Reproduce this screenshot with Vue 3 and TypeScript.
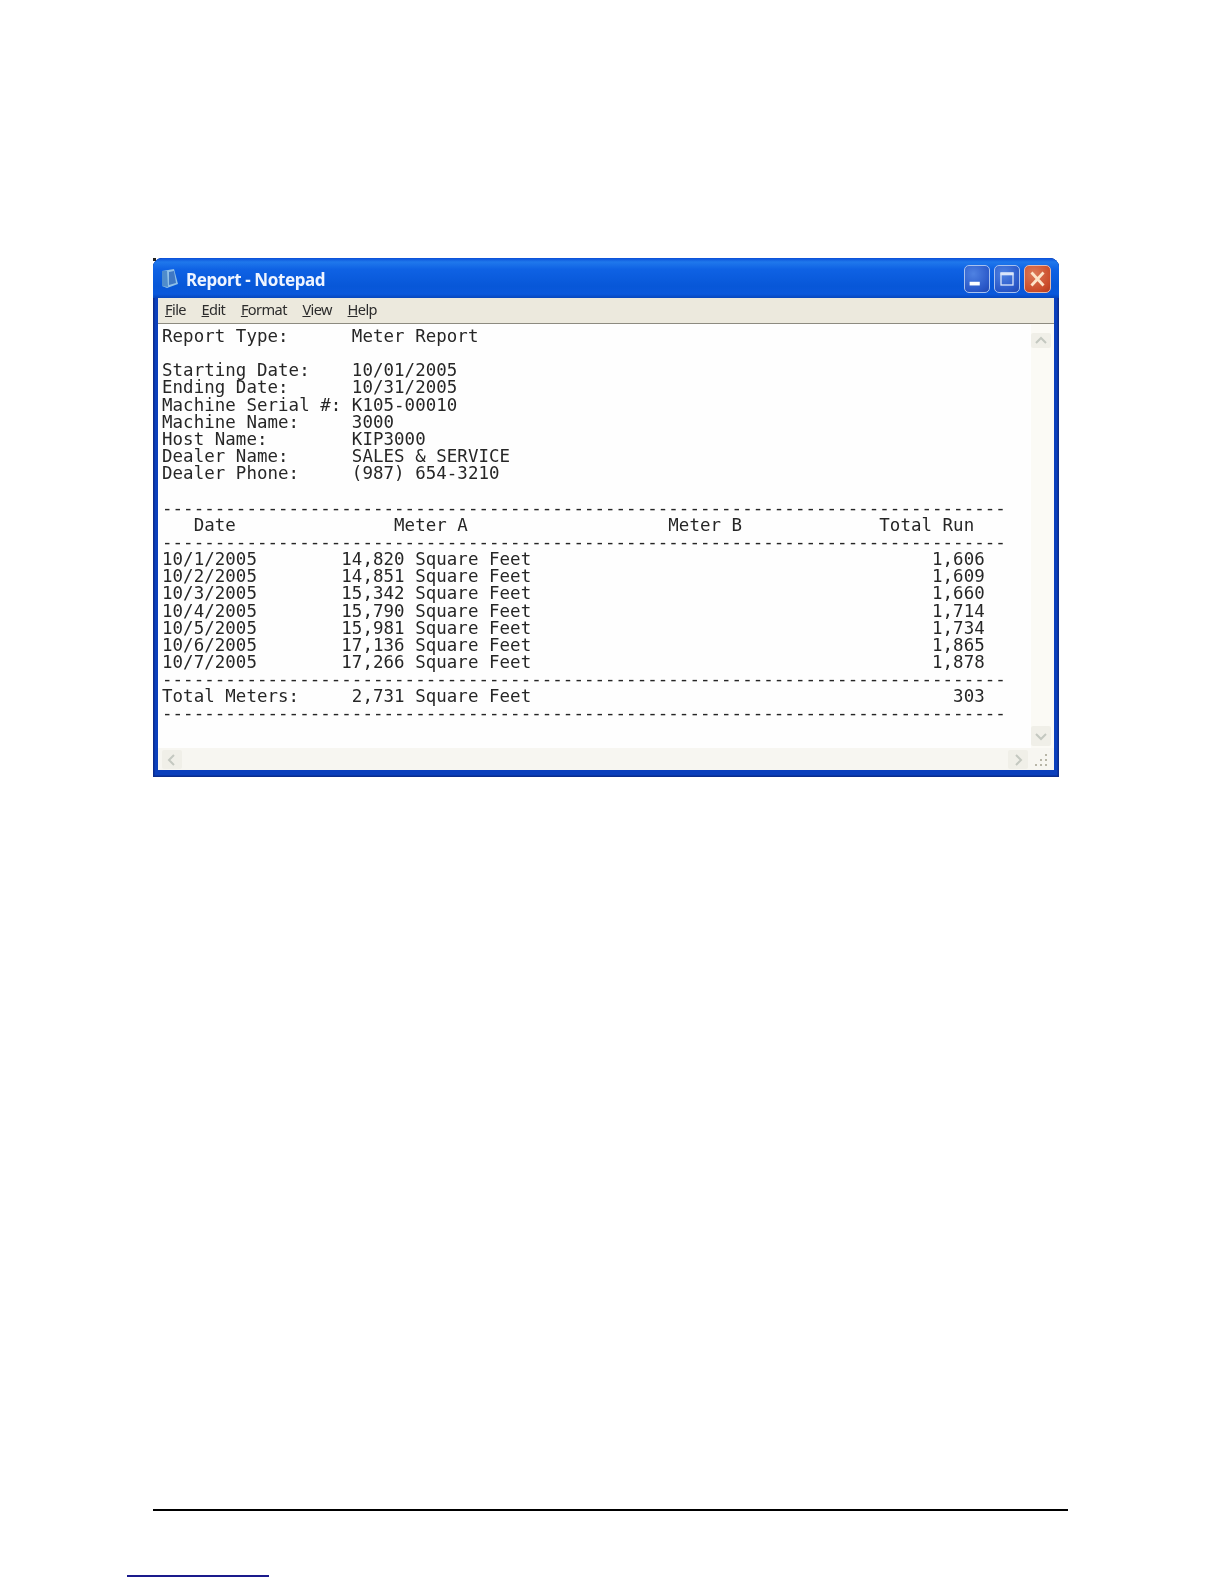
<script setup lang="ts">
const menus: [string, string][] = [['F', 'ile'], ['E', 'dit'], ['F', 'ormat'], ['V', 'iew'], ['H', 'elp']]
const dash = '-'.repeat(80)
const report = [
  'Report Type:      Meter Report',
  '',
  'Starting Date:    10/01/2005',
  'Ending Date:      10/31/2005',
  'Machine Serial #: K105-00010',
  'Machine Name:     3000',
  'Host Name:        KIP3000',
  'Dealer Name:      SALES & SERVICE',
  'Dealer Phone:     (987) 654-3210',
  '',
  dash,
  '   Date               Meter A                   Meter B             Total Run',
  dash,
  '10/1/2005        14,820 Square Feet                                      1,606',
  '10/2/2005        14,851 Square Feet                                      1,609',
  '10/3/2005        15,342 Square Feet                                      1,660',
  '10/4/2005        15,790 Square Feet                                      1,714',
  '10/5/2005        15,981 Square Feet                                      1,734',
  '10/6/2005        17,136 Square Feet                                      1,865',
  '10/7/2005        17,266 Square Feet                                      1,878',
  dash,
  'Total Meters:     2,731 Square Feet                                        303',
  dash,
].join('\n')
</script>

<template>
  <div class="page">
    <div class="window">
      <i class="speck"></i>
      <div class="titlebar">
        <svg class="app-icon" width="20" height="22" viewBox="0 0 20 22">
          <path d="M2 3 L14 1 L18 16 L7 20 L2 18 Z" fill="#8fc0e8" />
          <path d="M2 3 L7 3 L8 19 L2 18 Z" fill="#4f8ccc" />
          <path d="M9 4 L14 3 L16 15 L9 17 Z" fill="#3f78c4" />
        </svg>
        <span class="title">Report - Notepad</span>
        <div class="controls">
          <div class="ctl blue">
            <svg width="26" height="28" viewBox="0 0 26 28"><rect x="5" y="17" width="11" height="4" fill="#fff" /></svg>
          </div>
          <div class="ctl blue">
            <svg width="26" height="28" viewBox="0 0 26 28"><rect x="6.5" y="7.5" width="13" height="13" fill="none" stroke="#dbe6fa" stroke-width="1.4" /><rect x="6" y="7" width="14" height="3" fill="#dbe6fa" /></svg>
          </div>
          <div class="ctl red">
            <svg width="27" height="28" viewBox="0 0 27 28"><path d="M7 7 L20 21 M20 7 L7 21" stroke="#fde4c8" stroke-width="3" /></svg>
          </div>
        </div>
      </div>
      <div class="client">
        <div class="menubar">
          <span v-for="m in menus" :key="m[1]" class="menu"><u>{{ m[0] }}</u>{{ m[1] }}</span>
        </div>
        <div class="body">
          <pre class="text">{{ report }}</pre>
          <div class="vscroll">
            <div class="sbtn">
              <svg width="20" height="15" viewBox="0 0 20 15"><path d="M5 10 L10 5 L15 10" fill="none" stroke="#c4c8c0" stroke-width="2" /></svg>
            </div>
            <div class="sbtn">
              <svg width="20" height="20" viewBox="0 0 20 20"><path d="M5 8 L10 13 L15 8" fill="none" stroke="#c4c8c0" stroke-width="2" /></svg>
            </div>
          </div>
        </div>
        <div class="hscroll">
          <div class="sbtn h">
            <svg width="20" height="19" viewBox="0 0 20 19"><path d="M12 5 L7 10 L12 15" fill="none" stroke="#c4c8c0" stroke-width="2" /></svg>
          </div>
          <div class="sbtn h">
            <svg width="20" height="19" viewBox="0 0 20 19"><path d="M8 5 L13 10 L8 15" fill="none" stroke="#c4c8c0" stroke-width="2" /></svg>
          </div>
          <svg class="grip" width="20" height="19" viewBox="0 0 20 19" fill="#b8b6a8">
            <rect x="14" y="4" width="2" height="2" /><rect x="9" y="9" width="2" height="2" /><rect x="14" y="9" width="2" height="2" />
            <rect x="4" y="14" width="2" height="2" /><rect x="9" y="14" width="2" height="2" /><rect x="14" y="14" width="2" height="2" />
          </svg>
        </div>
      </div>
    </div>
    <div class="rule"></div>
    <div class="link-rule"></div>
  </div>
</template>

<style scoped>
.page {
  width: 1224px;
  height: 1584px;
  background: #fff;
  padding-top: 258px;
  box-sizing: border-box;
  overflow: hidden;
}
.window {
  position: relative;
  width: 906px;
  height: 519px;
  margin-left: 153px;
  box-sizing: border-box;
  display: flex;
  flex-direction: column;
  border-radius: 9px 9px 0 0;
  background: #0b3fbc;
  box-shadow: inset 0 0 0 1.5px #0a2c8e;
  padding: 0 5px 7px 5px;
  filter: blur(0.4px);
}
.speck {
  position: absolute;
  left: 0;
  top: 0;
  width: 3px;
  height: 3px;
  background: #222;
  z-index: 1;
}
.titlebar {
  height: 40px;
  margin: 0 -5px;
  padding: 2px 8px 0 7px;
  box-sizing: border-box;
  display: flex;
  align-items: center;
  border-radius: 9px 9px 0 0;
  background: linear-gradient(180deg, #0b4fd8 0%, #1f78ec 10%, #0f62e4 28%, #0757d8 70%, #0a58dc 90%, #0746bc 100%);
}
.app-icon {
  flex: none;
  margin-right: 6px;
}
.title {
  font: 700 17px "Noto Sans", "Open Sans", sans-serif;
  letter-spacing: -0.4px;
  color: #eef4ff;
}
.controls {
  margin-left: auto;
  display: flex;
  gap: 4px;
  margin-top: -1px;
}
.ctl {
  height: 28px;
  box-sizing: border-box;
  border: 1px solid #a9c2ee;
  border-radius: 5px;
  display: flex;
  align-items: center;
  justify-content: center;
  overflow: hidden;
}
.ctl.blue {
  width: 26px;
  background: radial-gradient(circle at 35% 30%, #4f82e2, #2a58c8 70%, #2148b0);
}
.ctl.red {
  width: 27px;
  border-color: #e8b8a8;
  background: radial-gradient(circle at 35% 30%, #dc7a58, #cb4d2a 70%, #b23a1e);
}
.client {
  flex: 1;
  min-height: 0;
  display: flex;
  flex-direction: column;
  background: #fff;
}
.menubar {
  height: 26px;
  flex: none;
  display: flex;
  align-items: center;
  padding: 0 0 3px 7px;
  box-sizing: border-box;
  gap: 15.6px;
  background: #ece9dd;
  border-bottom: 1px solid #8d8b80;
}
.menu {
  font: 400 14.6px "Noto Sans", "Open Sans", sans-serif;
  letter-spacing: -0.6px;
  color: #2c2c2c;
}
.body {
  flex: 1;
  min-height: 0;
  display: flex;
  justify-content: space-between;
  background: #fefefe;
}
.text {
  margin: 4px 0 0 4px;
  font-family: "DejaVu Sans Mono", monospace;
  font-size: 17.44px;
  letter-spacing: 0.05px;
  line-height: 17.15px;
  color: #262626;
}
.vscroll {
  width: 23px;
  flex: none;
  display: flex;
  flex-direction: column;
  justify-content: space-between;
  align-items: center;
  padding: 9px 3px 2px 0;
  box-sizing: border-box;
  background: #fbfaf5;
}
.sbtn {
  width: 20px;
  background: #f0efe8;
  display: flex;
  border-radius: 2px;
}
.sbtn.h {
  height: 19px;
}
.hscroll {
  height: 22px;
  flex: none;
  display: flex;
  align-items: center;
  padding: 0 3px 0 4px;
  background: #f7f6f1;
  box-sizing: border-box;
}
.hscroll .sbtn:nth-child(2) {
  margin-left: auto;
  margin-right: 3px;
}
.grip {
  flex: none;
}
.rule {
  width: 915px;
  height: 2px;
  margin: 732px 0 0 153px;
  background: #000;
}
.link-rule {
  width: 142px;
  height: 2px;
  margin: 64px 0 0 127px;
  background: #1a1a8c;
}
</style>
